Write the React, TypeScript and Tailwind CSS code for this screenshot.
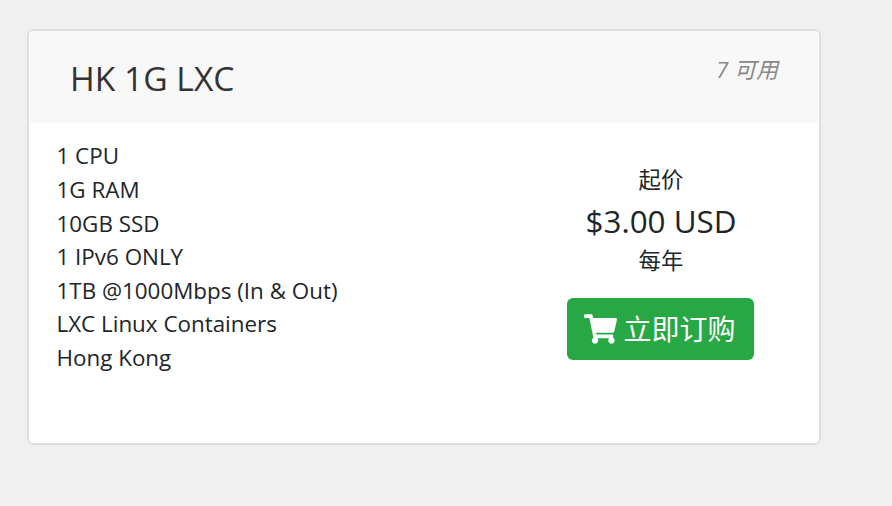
import React from 'react';
import { FaShoppingCart } from 'react-icons/fa';

const features = [
  '1 CPU',
  '1G RAM',
  '10GB SSD',
  '1 IPv6 ONLY',
  '1TB @1000Mbps (In & Out)',
  'LXC Linux Containers',
  'Hong Kong',
];

const App: React.FC = () => {
  return (
    <div className="w-[892px] h-[506px] overflow-hidden bg-[#f0f0f0] pt-[29px] pl-[27px] font-['Open_Sans','Noto_Sans_CJK_SC',sans-serif]">
      <div className="w-[794px] h-[416px] bg-white border-2 border-[#dedede] rounded-[6px] overflow-hidden">
        <div className="h-[92px] mx-px bg-[#f8f8f8] flex justify-between pl-[40px] pr-[40px]">
          <h3 className="text-[33.6px] leading-[46px] pt-[24px] text-[#333] h-fit">HK 1G LXC</h3>
          <span className="text-[22px] leading-[30px] pt-[23px] italic text-[#888] h-fit">7 可用</span>
        </div>
        <div className="flex">
          <div className="w-[511px] pl-[27.5px] pt-[16.4px] text-[22.4px] leading-[33.6px] text-[#212529]">
            {features.map((f) => (
              <div key={f}>{f}</div>
            ))}
          </div>
          <div className="w-[242px] flex flex-col items-center pt-[40px] text-[#212529]">
            <div className="text-[22.4px] leading-[34px]">起价</div>
            <div className="text-[31.36px] leading-[48px]">$3.00 USD</div>
            <div className="text-[22.4px] leading-[32px]">每年</div>
            <button className="mt-[21px] w-[187px] h-[62px] -translate-x-px bg-[#28a745] text-white rounded-[6px] flex items-center justify-center gap-[6px] text-[28px]">
              <FaShoppingCart className="w-[33px] h-[30px]" />
              <span>立即订购</span>
            </button>
          </div>
        </div>
      </div>
    </div>
  );
};

export default App;
